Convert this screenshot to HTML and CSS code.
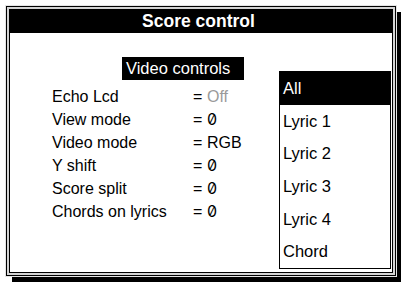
FILE: index.html
```html
<!DOCTYPE html>
<html>
<head>
<meta charset="utf-8">
<link rel="stylesheet" href="styles.css">
</head>
<body>
<div class="window">
  <div class="frame">
    <div class="titlebar">Score control</div>
    <div class="content">
      <div class="settings">
        <div class="section-label">Video controls</div>
        <div class="rows">
          <div class="label">Echo Lcd</div><div class="value"><span class="eq">=</span><span class="disabled">Off</span></div>
          <div class="label">View mode</div><div class="value"><span class="eq">=</span><span class="num">0</span></div>
          <div class="label">Video mode</div><div class="value"><span class="eq">=</span>RGB</div>
          <div class="label">Y shift</div><div class="value"><span class="eq">=</span><span class="num">0</span></div>
          <div class="label">Score split</div><div class="value"><span class="eq">=</span><span class="num">0</span></div>
          <div class="label">Chords on lyrics</div><div class="value"><span class="eq">=</span><span class="num">0</span></div>
        </div>
      </div>
      <ul class="list">
        <li class="item selected">All</li>
        <li class="item">Lyric 1</li>
        <li class="item">Lyric 2</li>
        <li class="item">Lyric 3</li>
        <li class="item">Lyric 4</li>
        <li class="item">Chord</li>
      </ul>
    </div>
  </div>
</div>
</body>
</html>
```

FILE: styles.css
```css
html, body {
  margin: 0;
  padding: 0;
  background: #fff;
  width: 401px;
  height: 282px;
  overflow: hidden;
}
body {
  font-family: "Liberation Sans", Arial, sans-serif;
  color: #000;
}
.window {
  margin: 6px 0 0 6px;
  width: 390px;
  height: 270px;
  box-sizing: border-box;
  border: 1px solid #000;
  background: #d4d4d4;
  padding: 2px;
  box-shadow: 0 0 0 1px #e4e4e4, 6px 6px 0 0 #000;
}
.frame {
  box-sizing: border-box;
  height: 100%;
  border: 1px solid #000;
  background: #fff;
  display: flex;
  flex-direction: column;
}
.titlebar {
  background: #000;
  color: #fff;
  height: 23px;
  line-height: 23px;
  font-weight: bold;
  font-size: 17.5px;
  text-align: center;
  padding-right: 5px;
}
.content {
  flex: 1;
  display: flex;
  align-items: flex-start;
}
.settings {
  width: 269px;
  padding-top: 24px;
}
.section-label {
  margin-left: 112px;
  width: 122px;
  height: 23px;
  line-height: 23px;
  box-sizing: border-box;
  padding-left: 4px;
  background: #000;
  color: #fff;
  font-size: 16.5px;
}
.rows {
  margin-top: 5px;
  margin-left: 42px;
  display: grid;
  grid-template-columns: 141px 1fr;
  grid-auto-rows: 23px;
  line-height: 23px;
  font-size: 16px;
}
.value {
  white-space: nowrap;
}
.eq {
  display: inline-block;
  width: 14px;
}
.disabled {
  color: #9a9a9a;
}
.num {
  font-family: Inter, "Liberation Sans", sans-serif;
  font-feature-settings: "zero" 1;
  font-variant-numeric: slashed-zero;
}
.list {
  list-style: none;
  margin: 38px 0 0 0;
  padding: 0;
  width: 110px;
  border: 1px solid #000;
  font-size: 16.5px;
}
.item {
  height: 32.7px;
  line-height: 32.7px;
  padding-left: 3px;
}
.item.selected {
  background: #000;
  color: #fff;
}
```
